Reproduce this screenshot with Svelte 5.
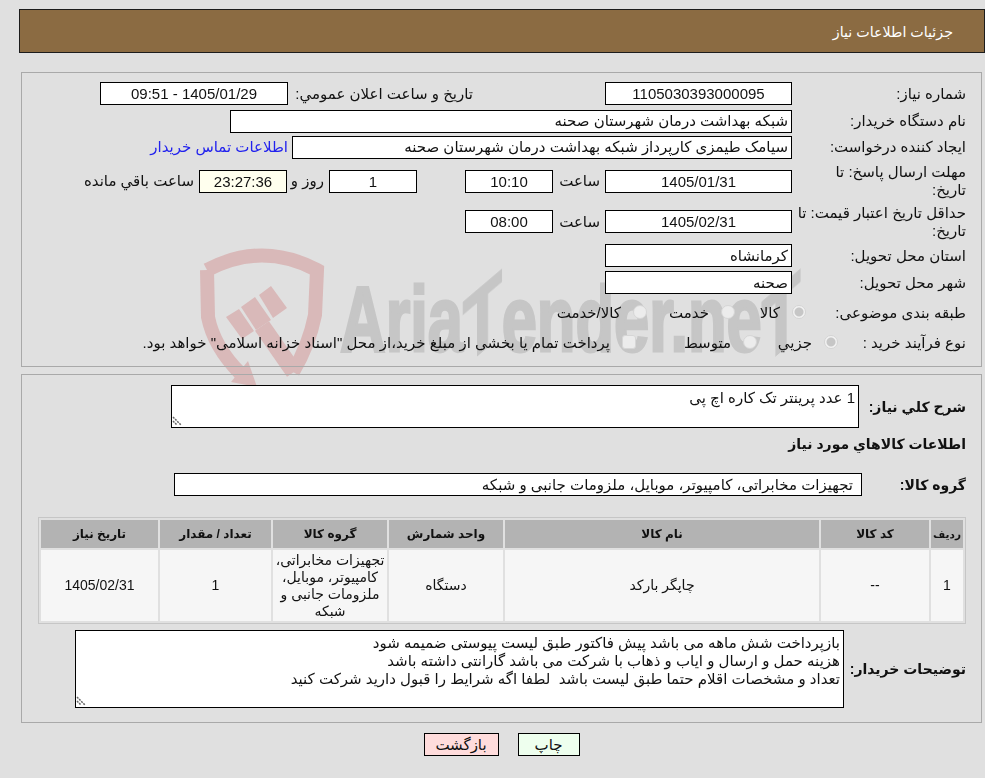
<script>
  // rows of the items table, right to left
  const columns = [
    { title: 'ردیف', width: 32 },
    { title: 'کد کالا', width: 108 },
    { title: 'نام کالا', width: 314 },
    { title: 'واحد شمارش', width: 114 },
    { title: 'گروه کالا', width: 114 },
    { title: 'تعداد / مقدار', width: 111 },
    { title: 'تاریخ نیاز', width: 117 }
  ];

  const items = [
    ['1', '--', 'چاپگر بارکد', 'دستگاه', 'تجهیزات مخابراتی، کامپیوتر، موبایل، ملزومات جانبی و شبکه', '1', '1405/02/31']
  ];

  const buyerNote = `بازپرداخت شش ماهه می باشد پیش فاکتور طبق لیست پیوستی ضمیمه شود
هزینه حمل و ارسال و ایاب و ذهاب با شرکت می باشد گارانتی داشته باشد
تعداد و مشخصات اقلام حتما طبق لیست باشد  لطفا اگه شرایط را قبول دارید شرکت کنید`;
</script>

<div class="page" dir="rtl">
  <div class="watermark" dir="ltr">
    <svg class="shield" viewBox="0 0 150 145" width="150" height="145" aria-hidden="true">
      <g fill="none" stroke="#d9b9b9" stroke-width="14">
        <path d="M17 25 Q72 -4 127 25 L125 70 Q119 100 103 127" />
        <path d="M17 25 L18 72 Q24 102 50 128" />
      </g>
      <path d="M72 81 L104 127" fill="none" stroke="#d9b9b9" stroke-width="17" />
      <g fill="#d9b9b9">
        <path d="M58 116 L67 142 L41 137 Z" />
        <path d="M81 41 L97 63 L83 73 L69 50 Z" />
        <path d="M65 52 L81 75 L66 85 L51 62 Z" />
        <path d="M49 64 L64 86 L52 94 L36 72 Z" />
      </g>
    </svg>
    <div class="brand">Aria<span class="tilt">T</span>ender.ne<span class="tilt">T</span></div>
  </div>

  <div class="title-bar">جزئیات اطلاعات نیاز</div>

  <section class="panel info">
    <div class="row r1">
      <span class="label">شماره نیاز:</span>
      <input class="box w187" readonly value="1105030393000095" />
      <span class="text public-label">تاریخ و ساعت اعلان عمومي:</span>
      <input class="box w188" readonly value="1405/01/29 - 09:51" />
    </div>
    <div class="row r2">
      <span class="label">نام دستگاه خریدار:</span>
      <input class="box start buyer" readonly value="شبکه بهداشت درمان شهرستان صحنه" />
    </div>
    <div class="row r3">
      <span class="label">ایجاد کننده درخواست:</span>
      <input class="box start creator" readonly value="سیامک طیمزی کارپرداز شبکه بهداشت درمان شهرستان صحنه" />
      <span class="link">اطلاعات تماس خریدار</span>
    </div>
    <div class="row r4">
      <span class="label">مهلت ارسال پاسخ: تا تاریخ:</span>
      <input class="box w187" readonly value="1405/01/31" />
      <span class="text hour">ساعت</span>
      <input class="box w88" readonly value="10:10" />
      <input class="box w88 days" readonly value="1" />
      <span class="text day-label">روز و</span>
      <input class="box w88 countdown" readonly value="23:27:36" />
      <span class="text left">ساعت باقي مانده</span>
    </div>
    <div class="row r5">
      <span class="label">حداقل تاریخ اعتبار قیمت: تا تاریخ:</span>
      <input class="box w187" readonly value="1405/02/31" />
      <span class="text hour">ساعت</span>
      <input class="box w88" readonly value="08:00" />
    </div>
    <div class="row r6">
      <span class="label">استان محل تحویل:</span>
      <input class="box start w187" readonly value="کرمانشاه" />
    </div>
    <div class="row r7">
      <span class="label">شهر محل تحویل:</span>
      <input class="box start w187" readonly value="صحنه" />
    </div>
    <div class="row r8">
      <span class="label">طبقه بندی موضوعی:</span>
      <label class="radio kala"><input type="radio" name="subject" disabled checked /><span>کالا</span></label>
      <label class="radio service"><input type="radio" name="subject" disabled /><span>خدمت</span></label>
      <label class="radio both"><input type="radio" name="subject" disabled /><span>کالا/خدمت</span></label>
    </div>
    <div class="row r9">
      <span class="label">نوع فرآیند خرید :</span>
      <label class="radio partial"><input type="radio" name="process" disabled checked /><span>جزیي</span></label>
      <label class="radio medium"><input type="radio" name="process" disabled /><span>متوسط</span></label>
      <label class="radio treasury"><input class="square" type="checkbox" disabled /><span>پرداخت تمام یا بخشی از مبلغ خرید،از محل "اسناد خزانه اسلامی" خواهد بود.</span></label>
    </div>
  </section>

  <section class="panel details">
    <div class="need-row">
      <span class="label bold need-label">شرح کلي نياز:</span>
      <textarea class="area need" readonly>1 عدد پرینتر تک کاره اچ پی</textarea>
    </div>
    <h3 class="heading">اطلاعات كالاهاي مورد نياز</h3>
    <div class="group-row">
      <span class="label bold group-label">گروه کالا:</span>
      <input class="box start group" readonly value="تجهیزات مخابراتی، کامپیوتر، موبایل، ملزومات جانبی و شبکه" />
    </div>

    <table>
      <colgroup>
        {#each columns as col}
          <col style="width: {col.width}px" />
        {/each}
      </colgroup>
      <thead>
        <tr>
          {#each columns as col}
            <th>{col.title}</th>
          {/each}
        </tr>
      </thead>
      <tbody>
        {#each items as row}
          <tr>
            {#each row as cell}
              <td>{cell}</td>
            {/each}
          </tr>
        {/each}
      </tbody>
    </table>

    <div class="note-row">
      <span class="label bold note-label">توضیحات خریدار:</span>
      <textarea class="area note" readonly>{buyerNote}</textarea>
    </div>
  </section>

  <div class="actions">
    <button class="btn print">چاپ</button>
    <button class="btn back">بازگشت</button>
  </div>
</div>

<style>
  :global(body) {
    background: #e0e0e0;
  }

  .page {
    position: relative;
    width: 985px;
    height: 778px;
    overflow: hidden;
    font-family: "Liberation Sans", "DejaVu Sans", sans-serif;
    font-size: 15px;
    color: #111;
    padding-top: 9px;
    box-sizing: border-box;
  }

  .watermark {
    position: absolute;
    left: 190px;
    top: 245px;
    width: 640px;
    height: 145px;
    z-index: 0;
  }

  .shield {
    display: block;
  }

  .brand {
    position: absolute;
    left: 150px;
    top: 24px;
    font-size: 93px;
    line-height: 100px;
    font-weight: 700;
    color: #c6c6c6;
    -webkit-text-stroke: 3px #c6c6c6;
    white-space: nowrap;
    transform: scaleX(0.68);
    transform-origin: left top;
  }

  .tilt {
    display: inline-block;
    transform: skewY(-30deg);
  }

  .title-bar,
  .panel,
  .actions {
    position: relative;
    z-index: 1;
  }

  .title-bar {
    margin-left: 19px;
    height: 44px;
    box-sizing: border-box;
    background: #8b6b42;
    border: 1px solid #1c1c1c;
    color: #fff;
    font-size: 14.25px;
    line-height: 44px;
    padding-right: 31px;
  }

  .panel {
    margin-left: 21px;
    margin-right: 3px;
    border: 1px solid #a9a9a9;
    box-sizing: border-box;
    padding-right: 15px;
  }

  .info {
    margin-top: 19px;
    height: 295px;
    padding-top: 7px;
  }

  .details {
    margin-top: 7px;
    height: 349px;
    padding-top: 10px;
  }

  .row {
    display: flex;
    align-items: center;
  }

  .r1 { height: 27px; }
  .r2 { height: 28px; }
  .r3 { height: 24px; }
  .r4 { height: 44px; }
  .r5 { height: 37px; }
  .r6 { height: 31px; }
  .r7 { height: 23px; }
  .r8 { height: 38px; }
  .r9 { height: 22px; }

  .label {
    flex: none;
    width: 174px;
    line-height: 18px;
    box-sizing: border-box;
  }

  .r4 .label { padding-left: 8px; }
  .r8 .label { width: 160px; }
  .r9 .label { width: 128px; }

  .bold {
    font-weight: 700;
    font-size: 14px;
    white-space: nowrap;
  }

  .box {
    flex: none;
    height: 23px;
    box-sizing: border-box;
    border: 1px solid #000;
    background: #fff;
    color: #111;
    font: inherit;
    padding: 0 3px;
    margin: 0;
    text-align: center;
    outline: none;
  }

  .start { text-align: right; }
  .w187 { width: 187px; }
  .w188 { width: 188px; }
  .w88 { width: 88px; }
  .buyer { width: 562px; }
  .creator { width: 500px; }
  .group { width: 688px; padding-right: 8px; }

  .text { flex: none; white-space: nowrap; }
  .public-label { width: 180px; margin-right: 132px; margin-left: 5px; }
  .hour { width: 52px; padding-right: 5px; box-sizing: border-box; }
  .days { margin-right: 48px; }
  .day-label { margin-right: 5px; width: 37px; }
  .countdown { background: #ffffee; }
  .left { margin-right: 5px; }

  .link {
    flex: none;
    color: #2222ee;
    margin-right: 4px;
  }

  .radio {
    display: flex;
    align-items: center;
    flex: none;
    white-space: nowrap;
  }

  .radio input {
    appearance: none;
    flex: none;
    width: 14px;
    height: 14px;
    margin: 0 0 2px 0;
    border-radius: 50%;
    background: #ececec;
    border: 1px solid #d4d4d4;
    box-sizing: border-box;
  }

  .radio input:checked {
    background: radial-gradient(circle, #c6c6c6 0 4px, #f2f2f2 5px);
  }

  .radio input.square {
    border-radius: 3px;
    border-color: #d6d6d6;
  }

  .radio span { margin-right: 12px; }

  .kala { width: 46px; }
  .service { width: 64px; margin-right: 25px; }
  .both { width: 92px; margin-right: 24px; }
  .partial { width: 60px; }
  .medium { width: 70px; margin-right: 21px; }
  .treasury { margin-right: 51px; }

  .need-row,
  .note-row,
  .group-row {
    display: flex;
    align-items: center;
  }

  .need-label { width: 107px; padding-left: 5px; }
  .group-label { width: 104px; }
  .note-label { width: 122px; padding-left: 5px; }

  .area {
    flex: none;
    display: block;
    box-sizing: border-box;
    margin: 0;
    border: 1px solid #000;
    background: #fff url("data:image/svg+xml,%3Csvg xmlns='http://www.w3.org/2000/svg' width='11' height='11'%3E%3Cg stroke='%23666' stroke-width='1.5' stroke-dasharray='2 1' fill='none'%3E%3Cpath d='M1 1 L9 9'/%3E%3Cpath d='M1 5 L5 9'/%3E%3C/g%3E%3C/svg%3E") no-repeat left bottom;
    color: #111;
    font: inherit;
    line-height: 18px;
    padding: 3px;
    outline: none;
    resize: none;
  }

  .need {
    width: 688px;
    height: 43px;
  }

  .note {
    width: 769px;
    height: 78px;
  }

  .heading {
    margin: 0;
    margin-top: 1px;
    height: 30px;
    line-height: 30px;
    font-size: 14px;
    font-weight: 700;
  }

  .group-row {
    margin-top: 14px;
  }

  table {
    table-layout: fixed;
    width: 928px;
    margin-top: 21px;
    border: 1px solid #c6c6c6;
    border-spacing: 2px;
    font-size: 14px;
  }

  th {
    height: 28px;
    padding: 0;
    background: #b3b3b3;
    font-size: 12px;
    font-weight: 700;
  }

  th:first-child {
    font-size: 10.5px;
  }

  td {
    height: 71px;
    padding: 0 2px;
    background: #f6f6f6;
    text-align: center;
    line-height: 17px;
    box-sizing: border-box;
  }

  .note-row {
    margin-top: 6px;
  }

  .actions {
    display: flex;
    justify-content: center;
    gap: 19px;
    margin-top: 10px;
    padding-left: 18px;
  }

  .btn {
    height: 23px;
    box-sizing: border-box;
    border: 1px solid #000;
    color: #111;
    font: inherit;
    padding: 0;
  }

  .print {
    width: 62px;
    background: #eeffee;
  }

  .back {
    width: 75px;
    background: #ffdcdc;
  }
</style>
